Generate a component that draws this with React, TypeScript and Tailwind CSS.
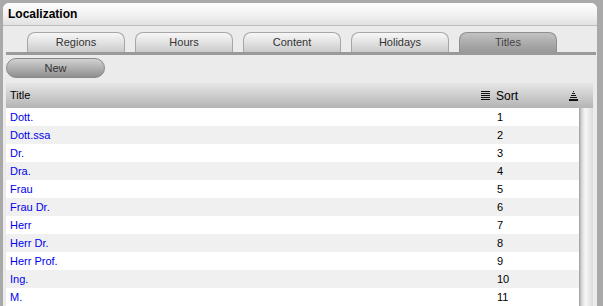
import React from "react";

const titles = [
  "Dott.",
  "Dott.ssa",
  "Dr.",
  "Dra.",
  "Frau",
  "Frau Dr.",
  "Herr",
  "Herr Dr.",
  "Herr Prof.",
  "Ing.",
  "M.",
];

const tabs = ["Regions", "Hours", "Content", "Holidays", "Titles"];

const SortLinesIcon = () => (
  <svg width="9" height="9" viewBox="0 0 9 9" className="block">
    {[0, 2, 4, 6, 8].map((y) => (
      <rect key={y} x="0" y={y} width="9" height="1" fill="#111" />
    ))}
  </svg>
);

const AscIcon = () => (
  <svg width="9" height="10" viewBox="0 0 9 10" className="block">
    <rect x="4" y="0" width="1" height="1" fill="#111" />
    <rect x="3" y="2" width="3" height="1" fill="#111" />
    <rect x="2" y="4" width="5" height="1" fill="#111" />
    <rect x="1" y="6" width="7" height="1" fill="#111" />
    <rect x="0" y="8" width="9" height="2" fill="#111" />
  </svg>
);

const App: React.FC = () => {
  return (
    <div
      className="w-[603px] h-[306px] overflow-hidden bg-[#a9a9a9] pt-[3px] pl-[3px] pr-[6px] text-[11px]"
      style={{ fontFamily: '"Liberation Sans", Arial, sans-serif' }}
    >
      <div className="h-[303px] bg-[#ebebeb] rounded-t-[6px] overflow-hidden flex flex-col">
        {/* panel header */}
        <div className="h-[23px] shrink-0 border-b border-[#bdbdbd] bg-[linear-gradient(to_bottom,#fdfdfd,#f2f2f2_50%,#e2e2e2)] flex items-center px-[5px] text-[12px] font-bold text-black">
          Localization
        </div>

        {/* tabs */}
        <div className="flex gap-[10px] pl-[24px] mt-[6px]">
          {tabs.map((t) => (
            <div
              key={t}
              className={`w-[98px] h-[20px] rounded-t-[8px] border border-b-0 flex items-center justify-center ${
                t === "Titles"
                  ? "border-[#8f8f8f] bg-[linear-gradient(to_bottom,#c2c2c2,#a8a8a8_60%,#999999)] text-[#444]"
                  : "border-[#a8a8a8] bg-[linear-gradient(to_bottom,#f7f7f7,#e2e2e2_50%,#cacaca)] text-[#333]"
              }`}
            >
              {t}
            </div>
          ))}
        </div>
        <div className="h-[3px] ml-[3px] mr-[1px] bg-[#9a9a9a]" />

        {/* toolbar */}
        <div className="ml-[3px] mt-[3px]">
          <button className="w-[99px] h-[20px] rounded-full border border-[#8a8a8a] bg-[linear-gradient(to_bottom,#d2d2d2,#b0b0b0_50%,#8f8f8f)] text-[#333] text-[11px] flex items-center justify-center">
            New
          </button>
        </div>

        {/* grid */}
        <div className="ml-[3px] mr-[4px] mt-[5px] flex-1 flex flex-col">
          <div className="h-[25px] shrink-0 flex items-center bg-[linear-gradient(to_bottom,#e6e6e6,#cfcfcf_45%,#b4b4b4)] text-black">
            <div className="w-[475px] pl-[4px]">Title</div>
            <SortLinesIcon />
            <div className="ml-[6px] text-[12px]">Sort</div>
            <div className="ml-[51px]">
              <AscIcon />
            </div>
          </div>
          <div className="flex flex-1">
            <div className="flex-1">
              {titles.map((t, i) => (
                <div
                  key={t}
                  className={`h-[18px] flex items-center ${
                    i % 2 === 0 ? "bg-white" : "bg-[#f0f0f0]"
                  }`}
                >
                  <div className="w-[487px] pl-[4px] text-[#0000ee]">{t}</div>
                  <div className="pl-[4px] text-black">{i + 1}</div>
                </div>
              ))}
            </div>
            <div className="w-[14px] bg-[linear-gradient(to_right,#9e9e9e,#d8d8d8_20%,#f6f6f6_45%,#e6e6e6_80%,#dcdcdc)]" />
          </div>
        </div>
      </div>
    </div>
  );
};

export default App;
